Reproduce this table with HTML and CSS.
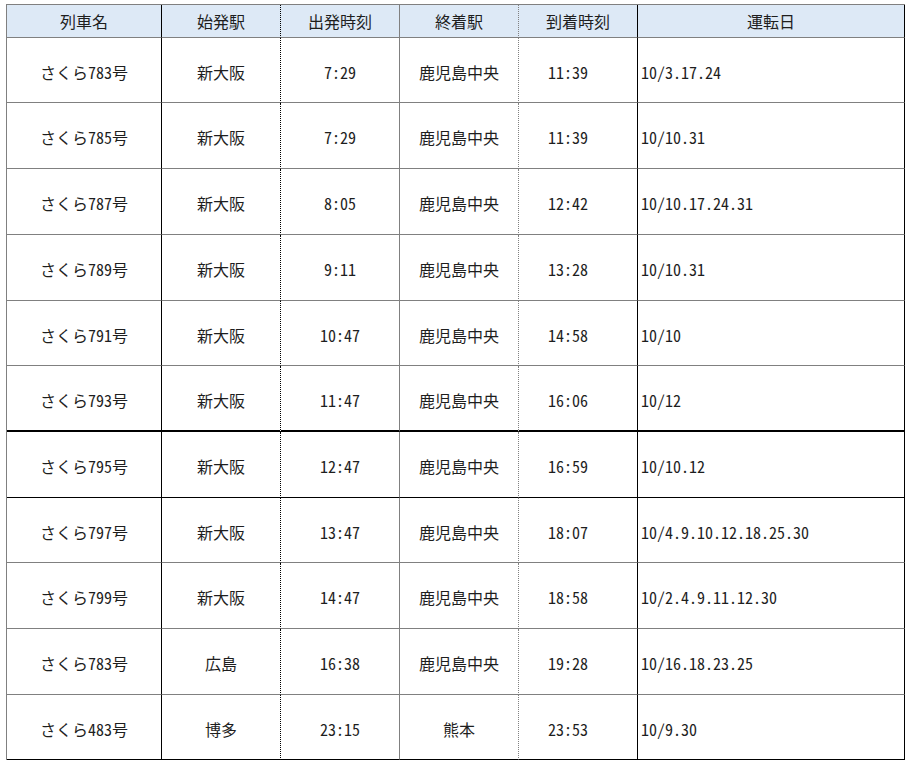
FILE: index.html
```html
<!DOCTYPE html>
<html lang="ja">
<head>
<meta charset="utf-8">
<title>さくら 運転日</title>
<link rel="stylesheet" href="styles.css">
</head>
<body>
<div class="timetable">
  <div class="row head">
    <div>列車名</div><div>始発駅</div><div>出発時刻</div><div>終着駅</div><div class="arr">到着時刻</div><div class="days-h">運転日</div>
  </div>
  <div class="row">
    <div>さくら783号</div><div>新大阪</div><div>7:29</div><div>鹿児島中央</div><div class="arr">11:39</div><div class="days">10/3.17.24</div>
  </div>
  <div class="row">
    <div>さくら785号</div><div>新大阪</div><div>7:29</div><div>鹿児島中央</div><div class="arr">11:39</div><div class="days">10/10.31</div>
  </div>
  <div class="row">
    <div>さくら787号</div><div>新大阪</div><div>8:05</div><div>鹿児島中央</div><div class="arr">12:42</div><div class="days">10/10.17.24.31</div>
  </div>
  <div class="row">
    <div>さくら789号</div><div>新大阪</div><div>9:11</div><div>鹿児島中央</div><div class="arr">13:28</div><div class="days">10/10.31</div>
  </div>
  <div class="row">
    <div>さくら791号</div><div>新大阪</div><div>10:47</div><div>鹿児島中央</div><div class="arr">14:58</div><div class="days">10/10</div>
  </div>
  <div class="row thick">
    <div>さくら793号</div><div>新大阪</div><div>11:47</div><div>鹿児島中央</div><div class="arr">16:06</div><div class="days">10/12</div>
  </div>
  <div class="row dark">
    <div>さくら795号</div><div>新大阪</div><div>12:47</div><div>鹿児島中央</div><div class="arr">16:59</div><div class="days">10/10.12</div>
  </div>
  <div class="row">
    <div>さくら797号</div><div>新大阪</div><div>13:47</div><div>鹿児島中央</div><div class="arr">18:07</div><div class="days">10/4.9.10.12.18.25.30</div>
  </div>
  <div class="row">
    <div>さくら799号</div><div>新大阪</div><div>14:47</div><div>鹿児島中央</div><div class="arr">18:58</div><div class="days">10/2.4.9.11.12.30</div>
  </div>
  <div class="row">
    <div>さくら783号</div><div>広島</div><div>16:38</div><div>鹿児島中央</div><div class="arr">19:28</div><div class="days">10/16.18.23.25</div>
  </div>
  <div class="row dark">
    <div>さくら483号</div><div>博多</div><div>23:15</div><div>熊本</div><div class="arr">23:53</div><div class="days">10/9.30</div>
  </div>
</div>
</body>
</html>
```

FILE: styles.css
```css
html, body {
  margin: 0;
  padding: 0;
  background: #ffffff;
}

body {
  padding: 4px 0 0 6px;
  font-family: "Noto Sans CJK JP", "Noto Sans", sans-serif;
  font-size: 16px;
  color: #1e1e1e;
  font-feature-settings: "hwid" 1;
}

.timetable {
  display: grid;
  width: 899px;
  grid-template-columns: 155px 119px 119px 119px 119px 267px;
  grid-template-rows: 33px 65px 66px 66px 66px 65px 66px 66px 65px 66px 66px 65px;
  border-top: 1px solid #808080;
  border-left: 1px solid #808080;
  box-sizing: border-box;
  width: 899px;
}

.row {
  display: contents;
}

.row > div {
  box-sizing: border-box;
  display: flex;
  align-items: center;
  justify-content: center;
  padding-top: 3px;
  border-bottom: 1px solid #808080;
  border-right: 1px solid #808080;
  white-space: nowrap;
  line-height: 1;
}

.row > div:nth-child(1) { border-right: 1px solid #000; }
.row > div:nth-child(2) { border-right: 1px dotted #000; }
.row > div:nth-child(3) { border-right: 1px solid #808080; }
.row > div:nth-child(4) { border-right: 1px dotted #808080; }
.row > div:nth-child(5) { border-right: 1px solid #000; }
.row > div:nth-child(6) { border-right: 1px solid #000; }

.row.head > div {
  background: #dde9f6;
  padding-top: 0;
}

.row > div.arr {
  padding-right: 20px;
}

.row.head > div.arr {
  padding-right: 0;
}

.row > div.days {
  justify-content: flex-start;
  padding-left: 3px;
}

.row.thick > div {
  border-bottom: 2px solid #000;
}

.row.dark > div {
  border-bottom: 1px solid #000;
}
```
